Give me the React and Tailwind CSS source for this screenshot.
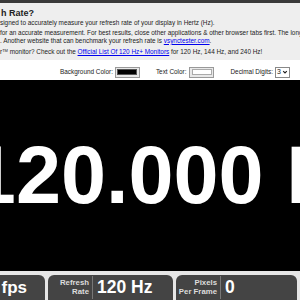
export default function App() {
  const font = "font-['Liberation_Sans',Arial,sans-serif]";
  return (
    <div className={`w-[300px] h-[300px] overflow-hidden bg-white ${font} flex flex-col`}>
      <div className="h-[3px] bg-[#3a3a3a] shrink-0" />
      <div className="bg-[#eeeeee] h-[57px] shrink-0 text-[#222] text-[6.4px] leading-[7.6px] whitespace-nowrap">
        <div className="text-[9px] font-bold leading-[10px] pt-[5px] pl-[1px]">h Rate?</div>
        <div className="mt-[1px]">signed to accurately measure your refresh rate of your display in Hertz (Hz).</div>
        <div className="mt-[2.5px]">for an accurate measurement. For best results, close other applications &amp; other browser tabs first. The longer you wait, the more accurate.</div>
        <div>. Another website that can benchmark your refresh rate is <a className="text-[#0000ee] underline">vsynctester.com</a>.</div>
        <div className="mt-[4px]">r<sup className="text-[4px]">TM</sup> monitor? Check out the <a className="text-[#0000ee] underline">Official List Of 120 Hz+ Monitors</a> for 120 Hz, 144 Hz, and 240 Hz!</div>
      </div>
      <div className="h-[20px] shrink-0 bg-white flex items-center justify-end pr-[10px] text-[6.4px] text-[#222] pt-[4px]">
        <span>Background Color:</span>
        <div className="ml-[2px] w-[25px] h-[11px] border border-[#999] bg-[#e8e8e8] p-[1.5px]">
          <div className="w-full h-full bg-black border border-[#555]" />
        </div>
        <span className="ml-[16px]">Text Color:</span>
        <div className="ml-[3px] w-[25px] h-[11px] border border-[#999] bg-[#e8e8e8] p-[1.5px]">
          <div className="w-full h-full bg-white border border-[#aaa]" />
        </div>
        <span className="ml-[16px]">Decimal Digits:</span>
        <div className="ml-[2px] h-[11px] px-[1px] border border-[#888] bg-white flex items-center gap-[1px] text-[7px]">
          <span>3</span>
          <svg width="6" height="6" viewBox="0 0 10 10"><path d="M2 3.5 L5 6.5 L8 3.5" fill="none" stroke="#222" strokeWidth="2" /></svg>
        </div>
      </div>
      <div className="h-[191px] shrink-0 bg-black flex items-center overflow-hidden">
        <div className="w-[600px] -ml-[122px] shrink-0 text-center text-white font-bold text-[81px] leading-none whitespace-nowrap">120.000 Hz</div>
      </div>
      <div className="flex-1 bg-[#e6e6e6] pt-[4px] flex gap-[3px] overflow-hidden">
        <div className="w-[100px] -ml-[55px] shrink-0 bg-[#444] rounded-t-[6px] flex items-center justify-end pr-[18px]">
          <span className="text-white font-bold text-[17px] leading-none">fps</span>
        </div>
        <div className="w-[125px] shrink-0 bg-[#444] rounded-t-[6px] flex items-stretch">
          <div className="w-[44px] shrink-0 flex flex-col justify-center items-end pr-[3px] text-[#ddd] font-bold text-[7.8px] leading-[8.5px] text-right">
            <span>Refresh</span>
            <span>Rate</span>
          </div>
          <div className="w-px bg-[#777] my-[1px]" />
          <div className="flex items-center pl-[4px] text-white font-bold text-[17.5px] leading-none whitespace-nowrap">120 Hz</div>
        </div>
        <div className="w-[121px] shrink-0 bg-[#444] rounded-t-[6px] flex items-stretch">
          <div className="w-[44px] shrink-0 flex flex-col justify-center items-end pr-[3px] text-[#ddd] font-bold text-[7.8px] leading-[8.5px] text-right whitespace-nowrap">
            <span>Pixels</span>
            <span>Per Frame</span>
          </div>
          <div className="w-px bg-[#777] my-[1px]" />
          <div className="flex items-center pl-[4px] text-white font-bold text-[17.5px] leading-none">0</div>
        </div>
      </div>
    </div>
  );
}
